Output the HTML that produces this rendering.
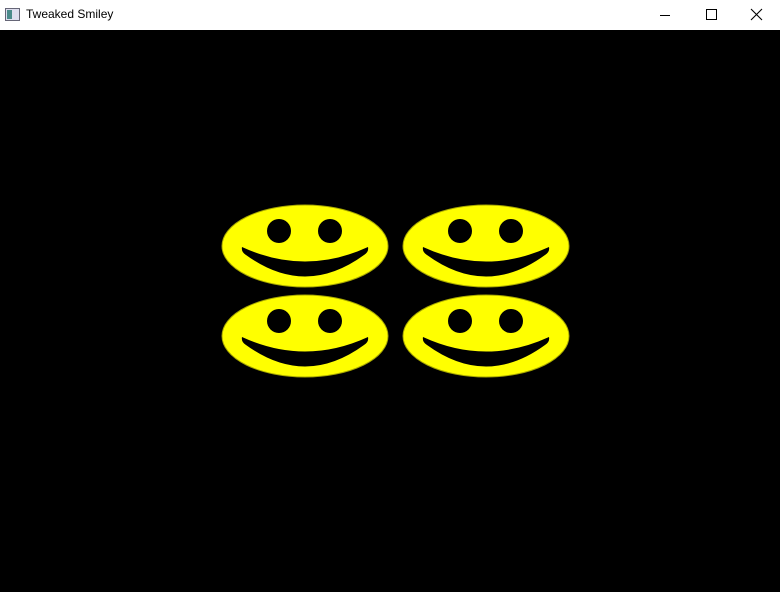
<!DOCTYPE html>
<html><head><style>
html,body{margin:0;padding:0;width:780px;height:592px;overflow:hidden;background:#000;font-family:"Liberation Sans",sans-serif}
.tb{position:absolute;left:0;top:0;width:780px;height:30px;background:#fff}
.tt{position:absolute;left:26px;top:7px;font-size:12px;color:#000}
</style></head><body>
<div class="tb">
<svg width="780" height="30" style="position:absolute;left:0;top:0">
<rect x="5.5" y="8.5" width="14" height="12" fill="#dde" stroke="#667"/>
<rect x="7" y="10" width="5" height="9" fill="#4a8a8a"/>
<line x1="660" y1="15.5" x2="670" y2="15.5" stroke="#000"/>
<rect x="706.5" y="9.5" width="10" height="10" fill="none" stroke="#000"/>
<path d="M751 9L762 20M762 9L751 20" stroke="#000" stroke-width="1.1"/>
</svg>
<div class="tt">Tweaked Smiley</div>
</div>
<svg width="780" height="562" style="position:absolute;left:0;top:30px">
<defs>
<g id="s">
<ellipse cx="0" cy="0" rx="83" ry="41" fill="#ffff00" stroke="#a8a800" stroke-width="1"/>
<ellipse cx="-26" cy="-15" rx="12" ry="12" fill="#000"/>
<ellipse cx="25" cy="-15" rx="12" ry="12" fill="#000"/>
<path d="M-63 1 Q-64 6 -59 9 Q0 52 59 9 Q64 6 63 1 Q0 30 -63 1Z" fill="#000"/>
</g>
</defs>
<use href="#s" x="305" y="216"/>
<use href="#s" x="486" y="216"/>
<use href="#s" x="305" y="306"/>
<use href="#s" x="486" y="306"/>
</svg>
</body></html>
